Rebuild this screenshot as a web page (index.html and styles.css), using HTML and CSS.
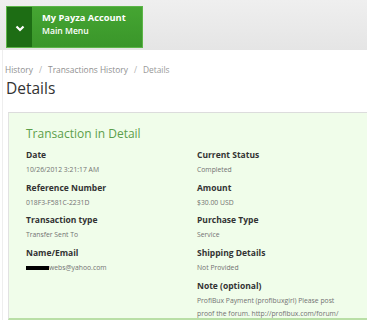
FILE: index.html
```html
<!DOCTYPE html>
<html lang="en">
<head>
    <meta charset="UTF-8">
    <meta name="viewport" content="width=device-width, initial-scale=1.0">
    <title>Payza - Transaction Details</title>
    <link rel="stylesheet" href="styles.css">
</head>
<body>
    <div class="topbar">
        <a class="menu-button" href="#">
            <span class="menu-toggle">
                <svg width="10" height="7" viewBox="0 0 10 7"><polyline points="1.5,1.5 5,5 8.5,1.5" fill="none" stroke="#fff" stroke-width="2.2"/></svg>
            </span>
            <span class="menu-text">
                <strong>My Payza Account</strong>
                <span>Main Menu</span>
            </span>
        </a>
    </div>

    <div class="page">
        <div class="breadcrumb">
            <a href="#">History</a><span class="sep">/</span><a href="#">Transactions History</a><span class="sep">/</span><span>Details</span>
        </div>
        <h1>Details</h1>

        <div class="panel">
            <h2>Transaction in Detail</h2>
            <div class="details">
                <div class="column">
                    <div class="field">
                        <div class="label">Date</div>
                        <div class="value">10/26/2012 3:21:17 AM</div>
                    </div>
                    <div class="field">
                        <div class="label">Reference Number</div>
                        <div class="value">018F3-F581C-2231D</div>
                    </div>
                    <div class="field">
                        <div class="label">Transaction type</div>
                        <div class="value">Transfer Sent To</div>
                    </div>
                    <div class="field">
                        <div class="label">Name/Email</div>
                        <div class="value"><span class="redacted"></span>webs@yahoo.com</div>
                    </div>
                </div>
                <div class="column">
                    <div class="field">
                        <div class="label">Current Status</div>
                        <div class="value">Completed</div>
                    </div>
                    <div class="field">
                        <div class="label">Amount</div>
                        <div class="value">$30.00 USD</div>
                    </div>
                    <div class="field">
                        <div class="label">Purchase Type</div>
                        <div class="value">Service</div>
                    </div>
                    <div class="field">
                        <div class="label">Shipping Details</div>
                        <div class="value">Not Provided</div>
                    </div>
                    <div class="field">
                        <div class="label">Note (optional)</div>
                        <div class="value note">ProfiBux Payment (profibuxgirl) Please post proof the forum. http://profibux.com/forum/</div>
                    </div>
                </div>
            </div>
        </div>
    </div>
</body>
</html>
```

FILE: styles.css
```css
body {
    margin: 0;
    font-family: "Open Sans", "DejaVu Sans", sans-serif;
    background: #fff;
    color: #333;
    overflow: hidden;
}
a {
    color: inherit;
    text-decoration: none;
}
.topbar {
    height: 50px;
    box-sizing: border-box;
    padding: 6px 0 0 6px;
    background: linear-gradient(#efefef, #e5e5e5);
}
.menu-button {
    display: flex;
    width: 137px;
    height: 42px;
    box-sizing: border-box;
    border: 1px solid #5cb548;
    background: linear-gradient(#45a532, #3a962a);
    color: #fff;
}
.menu-toggle {
    width: 25px;
    display: flex;
    align-items: center;
    justify-content: center;
    background: #1d6d14;
    padding-top: 2px;
}
.menu-text {
    display: flex;
    flex-direction: column;
    padding: 4px 0 0 10px;
}
.menu-text strong {
    font-size: 9.3px;
    line-height: 14px;
    font-weight: 700;
}
.menu-text span {
    font-size: 8.6px;
    line-height: 12px;
    font-weight: 600;
}
.page {
    padding: 14px 0 0 0;
    border-left: 1px solid #eee;
    margin-left: 2px;
}
.breadcrumb {
    font-size: 8.4px;
    line-height: 12px;
    color: #999;
    padding-left: 2px;
}
.breadcrumb a {
    color: #8f8f8f;
}
.breadcrumb .sep {
    margin: 0 6px;
    color: #b0b0b0;
}
h1 {
    margin: 2px 0 0 3px;
    font-size: 15.5px;
    line-height: 20px;
    font-weight: 400;
    color: #333;
}
.panel {
    margin: 14px 0 0 5px;
    height: 208px;
    box-sizing: border-box;
    padding: 12px 0 0 17px;
    background: #f0fdea;
    border-top: 1px solid #dcdcdc;
    border-left: 1px solid #e2e2e2;
    border-bottom: 2px solid #b9dfa6;
}
.panel h2 {
    margin: 0 0 5px 0;
    font-size: 12px;
    line-height: 18px;
    font-weight: 400;
    color: #5c9f4b;
}
.details {
    display: grid;
    grid-template-columns: 171px 1fr;
}
.column {
    display: flex;
    flex-direction: column;
    gap: 4.7px;
}
.label {
    font-size: 8.5px;
    line-height: 14px;
    font-weight: 700;
    color: #333;
    margin-bottom: 1px;
}
.value {
    font-size: 6.8px;
    line-height: 13px;
    color: #727272;
}
.note {
    width: 150px;
}
.redacted {
    display: inline-block;
    width: 23px;
    height: 4px;
    background: #000;
    vertical-align: middle;
}
```
